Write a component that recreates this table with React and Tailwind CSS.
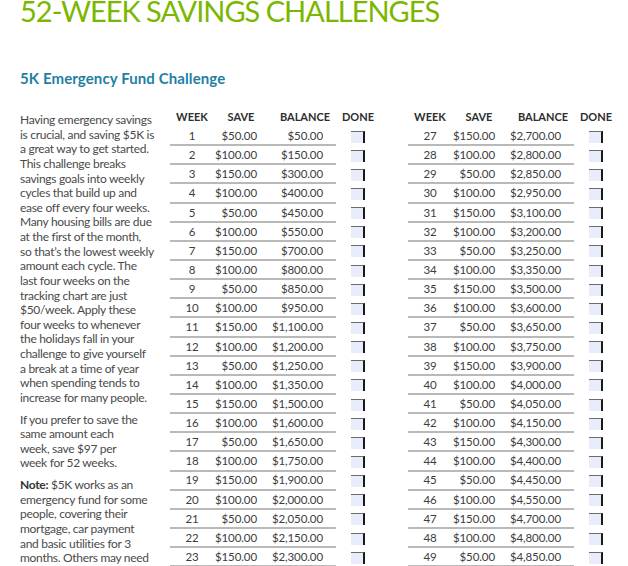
const font = { fontFamily: "Lato, 'Liberation Sans', sans-serif" };

const cycle = [50, 100, 150, 100];
const weeks = [];
let total = 0;
for (let w = 1; w <= 52; w++) {
  const save = cycle[(w - 1) % 4];
  total += save;
  weeks.push({ week: w, save, balance: total });
}

const money = (n) => "$" + n.toLocaleString("en-US", { minimumFractionDigits: 2, maximumFractionDigits: 2 });

const para1 = [
  "Having emergency savings",
  "is crucial, and saving $5K is",
  "a great way to get started.",
  "This challenge breaks",
  "savings goals into weekly",
  "cycles that build up and",
  "ease off every four weeks.",
  "Many housing bills are due",
  "at the first of the month,",
  "so that’s the lowest weekly",
  "amount each cycle. The",
  "last four weeks on the",
  "tracking chart are just",
  "$50/week. Apply these",
  "four weeks to whenever",
  "the holidays fall in your",
  "challenge to give yourself",
  "a break at a time of year",
  "when spending tends to",
  "increase for many people.",
];

const para2 = ["If you prefer to save the", "same amount each", "week, save $97 per", "week for 52 weeks."];

const para3 = [
  "$5K works as an",
  "emergency fund for some",
  "people, covering their",
  "mortgage, car payment",
  "and basic utilities for 3",
  "months. Others may need",
];

function Lines({ lines }) {
  return lines.map((l, i) => (
    <div key={i} className="whitespace-nowrap">{l}</div>
  ));
}

function Checkbox() {
  return <div className="w-[14px] h-[12px] shrink-0 bg-[#e9ecfa] border-t border-t-[#6b6b6b] border-r-2 border-r-[#1a1a1a]" />;
}

function WeekTable({ rows }) {
  return (
    <div className="w-[210px] shrink-0 text-[#3d3d3d]">
      <div className="flex h-[19px] items-center text-[11px] font-bold text-[#2e2e2e]">
        <div className="w-[44px] shrink-0 text-center">WEEK</div>
        <div className="w-[54px] shrink-0 text-center">SAVE</div>
        <div className="w-[68px] shrink-0 text-center pl-[6px]">BALANCE</div>
        <div className="w-[44px] shrink-0 text-center">DONE</div>
      </div>
      {rows.map((r) => (
        <div key={r.week} className="flex h-[19.15px] items-center text-[11.5px] tracking-[-0.1px]">
          <div className="flex w-[166px] shrink-0 h-full items-center border-b-2 border-[#b9b9b9]">
            <div className="w-[44px] shrink-0 text-center">{r.week}</div>
            <div className="w-[54px] shrink-0 text-right pr-[11px]">{money(r.save)}</div>
            <div className="w-[68px] shrink-0 text-right pr-[13px]">{money(r.balance)}</div>
          </div>
          <div className="w-[44px] shrink-0 flex justify-center">
            <Checkbox />
          </div>
        </div>
      ))}
    </div>
  );
}

export default function App() {
  return (
    <div className="bg-white min-h-screen px-[20px] overflow-hidden" style={font}>
      <h1 className="-mt-[4px] text-[29px] leading-none font-normal tracking-[-1px] text-[#7ab800] whitespace-nowrap">
        52-WEEK SAVINGS CHALLENGES
      </h1>
      <h2 className="mt-[46px] text-[15px] leading-none font-bold tracking-[0.1px] text-[#1f7fa3]">
        5K Emergency Fund Challenge
      </h2>
      <div className="flex mt-[22px]">
        <div className="w-[150px] shrink-0 pt-[5px] text-[12px] leading-[14.63px] tracking-[-0.3px] text-[#4a4a4a]">
          <Lines lines={para1} />
          <div className="mt-[7px]">
            <Lines lines={para2} />
          </div>
          <div className="mt-[7px]">
            <div className="whitespace-nowrap">
              <span className="font-bold text-[#333]">Note:</span> {para3[0]}
            </div>
            <Lines lines={para3.slice(1)} />
          </div>
        </div>
        <div className="flex shrink-0 gap-[28px]">
          <WeekTable rows={weeks.slice(0, 26)} />
          <WeekTable rows={weeks.slice(26)} />
        </div>
      </div>
    </div>
  );
}
